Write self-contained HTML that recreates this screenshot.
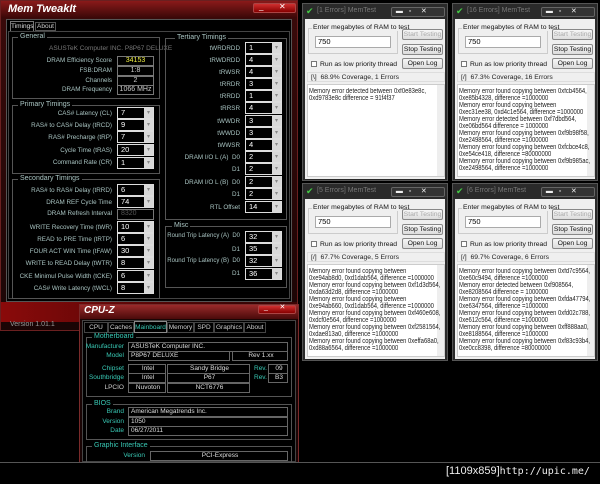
<!DOCTYPE html>
<html><head><meta charset="utf-8"><style>
*{margin:0;padding:0;box-sizing:border-box}
body{width:600px;height:484px;background:#000;position:relative;overflow:hidden;font-family:"Liberation Sans",sans-serif}
div{position:absolute}
.l{color:#a9c4c2;font-size:6.3px;text-align:right;white-space:nowrap;line-height:9px}
.c{width:37px;height:12px;border:1px solid #ddd;background:#000;color:#fff;font-size:7.5px;line-height:10px;padding-left:3px}
.c::after{content:"▾";position:absolute;right:0;top:0;width:9px;height:10px;background:#d8d8d8;color:#888;font-size:6px;text-align:center;line-height:10px}
.v{height:10px;border:1px solid #777;background:#000;color:#ccc;font-size:7px;line-height:8px;text-align:center}
.g{border:1px solid #555}
.gt{background:#000;color:#a9c4c2;font-size:7px;padding:0 2px;line-height:8px}
.mt{width:146px;height:178px;background:#2a2a2a;border:1px solid #555}
.mt .cl{left:2px;top:15px;width:140px;height:160px;background:#efefef}
.mt .tt{left:14px;top:3px;color:#777;font-size:7px}
.mt .bt{height:11px;background:linear-gradient(#f6f6f6,#ddd);border:1px solid #888;border-radius:2px;font-size:6.8px;line-height:9px;text-align:center;color:#111;white-space:nowrap}
.mt .tx{font-size:7px;line-height:7px;color:#222;white-space:nowrap;transform:scaleX(0.84);transform-origin:0 0}
.mt .ta{left:4px;top:80px;width:138px;height:93px;background:#fff;border:1px solid #ccc;overflow:hidden}
.cz{color:#38c8b4;font-size:6.5px;text-align:right;line-height:9px;white-space:nowrap}
.czv{border:1px solid #666;color:#ddd;font-size:6.5px;line-height:8px;height:10px;padding-left:2px;white-space:nowrap}
</style></head><body>

<!-- MemTweakIt -->
<div style="left:0;top:0;width:298px;height:331px;background:linear-gradient(#3a0a0a,#1a0505);border:1px solid #6a2020"></div>
<div style="left:1px;top:1px;width:296px;height:17px;background:linear-gradient(#8a1a1a,#3a0808)"></div>
<div style="left:8px;top:3px;color:#fff;font-weight:bold;font-style:italic;font-size:11px">Mem TweakIt</div>
<div style="left:253px;top:3px;width:43px;height:10px;background:linear-gradient(#d03030,#800);border:1px solid #a44;border-radius:2px"></div>
<div style="left:259px;top:2px;color:#fff;font-size:8px">_&nbsp;&nbsp;&nbsp;&nbsp;&nbsp;&nbsp;&nbsp;✕</div>
<div style="left:6px;top:19px;width:286px;height:283px;background:#000;border:1px solid #555"></div>
<div style="left:10px;top:21px;width:24px;height:10px;border:1px solid #777;border-bottom:none;background:#000;color:#ddd;font-size:6.5px;text-align:center;line-height:9px">Timings</div>
<div style="left:35px;top:22px;width:21px;height:9px;border:1px solid #555;color:#ccc;font-size:6.5px;text-align:center;line-height:8px">About</div>
<div style="left:8px;top:31px;width:282px;height:268px;border:1px solid #444"></div>
<div style="left:1px;top:302px;width:296px;height:20px;background:linear-gradient(90deg,#8a0a0a,#3a0505 80%)"></div>
<div style="left:10px;top:321px;color:#999;font-size:7px">Version 1.01.1</div>

<!-- General -->
<div class="g" style="left:12px;top:37px;width:148px;height:62px"></div>
<div class="gt" style="left:18px;top:33px">General</div>
<div style="left:49px;top:45px;color:#777;font-size:6.5px">ASUSTeK Computer INC. P8P67 DELUXE</div>
<div class="l" style="left:0;width:112px;top:56px">DRAM Efficiency Score</div><div class="v" style="left:117px;top:56px;width:37px;color:#ee4">34153</div>
<div class="l" style="left:0;width:112px;top:66px">FSB:DRAM</div><div class="v" style="left:117px;top:66px;width:37px">1:8</div>
<div class="l" style="left:0;width:112px;top:76px">Channels</div><div class="v" style="left:117px;top:76px;width:37px">2</div>
<div class="l" style="left:0;width:112px;top:85px">DRAM Frequency</div><div class="v" style="left:117px;top:85px;width:37px">1066 MHz</div>

<!-- Primary -->
<div class="g" style="left:12px;top:105px;width:148px;height:69px"></div>
<div class="gt" style="left:18px;top:101px">Primary Timings</div>
<div class="l" style="left:0;width:112px;top:109px">CAS# Latency (CL)</div><div class="c" style="left:117px;top:107px">7</div>
<div class="l" style="left:0;width:112px;top:121px">RAS# to CAS# Delay (tRCD)</div><div class="c" style="left:117px;top:119px">9</div>
<div class="l" style="left:0;width:112px;top:133px">RAS# Precharge (tRP)</div><div class="c" style="left:117px;top:131px">7</div>
<div class="l" style="left:0;width:112px;top:146px">Cycle Time (tRAS)</div><div class="c" style="left:117px;top:144px">20</div>
<div class="l" style="left:0;width:112px;top:158px">Command Rate (CR)</div><div class="c" style="left:117px;top:157px">1</div>

<!-- Secondary -->
<div class="g" style="left:12px;top:179px;width:148px;height:120px"></div>
<div class="gt" style="left:18px;top:175px">Secondary Timings</div>
<div class="l" style="left:0;width:112px;top:186px">RAS# to RAS# Delay (tRRD)</div><div class="c" style="left:117px;top:184px">6</div>
<div class="l" style="left:0;width:112px;top:198px">DRAM REF Cycle Time</div><div class="c" style="left:117px;top:196px">74</div>
<div class="l" style="left:0;width:112px;top:209px">DRAM Refresh Interval</div><div class="v" style="left:117px;top:209px;width:37px;height:11px;text-align:left;padding-left:3px;color:#555">8320</div>
<div class="l" style="left:0;width:112px;top:223px">WRITE Recovery Time (tWR)</div><div class="c" style="left:117px;top:221px">10</div>
<div class="l" style="left:0;width:112px;top:235px">READ to PRE Time (tRTP)</div><div class="c" style="left:117px;top:233px">6</div>
<div class="l" style="left:0;width:112px;top:247px">FOUR ACT WIN Time (tFAW)</div><div class="c" style="left:117px;top:245px">30</div>
<div class="l" style="left:0;width:112px;top:259px">WRITE to READ Delay (tWTR)</div><div class="c" style="left:117px;top:257px">8</div>
<div class="l" style="left:0;width:112px;top:272px">CKE Minimul Pulse Width (tCKE)</div><div class="c" style="left:117px;top:270px">6</div>
<div class="l" style="left:0;width:112px;top:284px">CAS# Write Latency (tWCL)</div><div class="c" style="left:117px;top:282px">8</div>

<!-- Tertiary -->
<div class="g" style="left:165px;top:38px;width:122px;height:182px"></div>
<div class="gt" style="left:175px;top:34px">Tertiary Timings</div>
<div class="l" style="left:150px;width:90px;top:44px">tWRDRDD</div><div class="c" style="left:245px;top:42px">1</div>
<div class="l" style="left:150px;width:90px;top:56px">tRWDRDD</div><div class="c" style="left:245px;top:54px">4</div>
<div class="l" style="left:150px;width:90px;top:68px">tRWSR</div><div class="c" style="left:245px;top:66px">4</div>
<div class="l" style="left:150px;width:90px;top:80px">tRRDR</div><div class="c" style="left:245px;top:78px">3</div>
<div class="l" style="left:150px;width:90px;top:92px">tRRDD</div><div class="c" style="left:245px;top:90px">1</div>
<div class="l" style="left:150px;width:90px;top:104px">tRRSR</div><div class="c" style="left:245px;top:102px">4</div>
<div class="l" style="left:150px;width:90px;top:117px">tWWDR</div><div class="c" style="left:245px;top:115px">3</div>
<div class="l" style="left:150px;width:90px;top:129px">tWWDD</div><div class="c" style="left:245px;top:127px">3</div>
<div class="l" style="left:150px;width:90px;top:141px">tWWSR</div><div class="c" style="left:245px;top:139px">4</div>
<div class="l" style="left:150px;width:90px;top:153px">DRAM I/O L (A)&nbsp;&nbsp;D0</div><div class="c" style="left:245px;top:151px">2</div>
<div class="l" style="left:150px;width:90px;top:165px">D1</div><div class="c" style="left:245px;top:163px">2</div>
<div class="l" style="left:150px;width:90px;top:178px">DRAM I/O L (B)&nbsp;&nbsp;D0</div><div class="c" style="left:245px;top:176px">2</div>
<div class="l" style="left:150px;width:90px;top:190px">D1</div><div class="c" style="left:245px;top:188px">2</div>
<div class="l" style="left:150px;width:90px;top:203px">RTL Offset</div><div class="c" style="left:245px;top:201px">14</div>

<!-- Misc -->
<div class="g" style="left:165px;top:226px;width:122px;height:62px"></div>
<div class="gt" style="left:172px;top:222px">Misc</div>
<div class="l" style="left:150px;width:90px;top:232px;font-size:6px">Round Trip Latency (A)&nbsp;&nbsp;D0</div><div class="c" style="left:245px;top:231px">32</div>
<div class="l" style="left:150px;width:90px;top:245px">D1</div><div class="c" style="left:245px;top:243px">35</div>
<div class="l" style="left:150px;width:90px;top:257px;font-size:6px">Round Trip Latency (B)&nbsp;&nbsp;D0</div><div class="c" style="left:245px;top:255px">32</div>
<div class="l" style="left:150px;width:90px;top:269px">D1</div><div class="c" style="left:245px;top:268px">36</div>

<!-- CPU-Z -->
<div style="left:79px;top:304px;width:220px;height:160px;background:#1a0505;border:1px solid #7a2a2a"></div>
<div style="left:80px;top:305px;width:218px;height:14px;background:linear-gradient(#9a2a2a,#4a0a0a)"></div>
<div style="left:84px;top:305px;color:#fff;font-weight:bold;font-style:italic;font-size:10px">CPU-Z</div>
<div style="left:258px;top:305px;width:38px;height:9px;background:linear-gradient(#d03030,#800);border:1px solid #a44;border-radius:2px"></div>
<div style="left:264px;top:303px;color:#fff;font-size:7px">_&nbsp;&nbsp;&nbsp;&nbsp;&nbsp;&nbsp;✕</div>
<div style="left:82px;top:320px;width:214px;height:142px;background:#000;border:1px solid #444"></div>
<div style="left:84px;top:322px;width:24px;height:11px;border:1px solid #444;color:#ccc;font-size:6.5px;text-align:center;line-height:10px">CPU</div>
<div style="left:108px;top:322px;width:26px;height:11px;border:1px solid #444;color:#ccc;font-size:6.5px;text-align:center;line-height:10px">Caches</div>
<div style="left:134px;top:321px;width:33px;height:12px;border:1px solid #888;color:#38c8b4;font-size:6.5px;text-align:center;line-height:11px">Mainboard</div>
<div style="left:167px;top:322px;width:27px;height:11px;border:1px solid #444;color:#ccc;font-size:6.5px;text-align:center;line-height:10px">Memory</div>
<div style="left:194px;top:322px;width:20px;height:11px;border:1px solid #444;color:#ccc;font-size:6.5px;text-align:center;line-height:10px">SPD</div>
<div style="left:214px;top:322px;width:30px;height:11px;border:1px solid #444;color:#ccc;font-size:6.5px;text-align:center;line-height:10px">Graphics</div>
<div style="left:244px;top:322px;width:22px;height:11px;border:1px solid #444;color:#ccc;font-size:6.5px;text-align:center;line-height:10px">About</div>
<div class="g" style="left:86px;top:337px;width:206px;height:60px"></div>
<div class="gt" style="left:92px;top:333px;color:#38c8b4">Motherboard</div>
<div class="cz" style="left:60px;width:64px;top:342px">Manufacturer</div><div class="czv" style="left:128px;top:342px;width:160px">ASUSTeK Computer INC.</div>
<div class="cz" style="left:60px;width:64px;top:351px">Model</div><div class="czv" style="left:128px;top:351px;width:102px">P8P67 DELUXE</div><div class="czv" style="left:232px;top:351px;width:56px;text-align:center">Rev 1.xx</div>
<div class="cz" style="left:60px;width:64px;top:364px">Chipset</div><div class="czv" style="left:128px;top:364px;width:38px;text-align:center">Intel</div><div class="czv" style="left:167px;top:364px;width:83px;text-align:center">Sandy Bridge</div><div class="cz" style="left:254px;top:364px">Rev.</div><div class="czv" style="left:268px;top:364px;width:20px;text-align:center">09</div>
<div class="cz" style="left:60px;width:64px;top:373px">Southbridge</div><div class="czv" style="left:128px;top:373px;width:38px;text-align:center">Intel</div><div class="czv" style="left:167px;top:373px;width:83px;text-align:center">P67</div><div class="cz" style="left:254px;top:373px">Rev.</div><div class="czv" style="left:268px;top:373px;width:20px;text-align:center">B3</div>
<div class="cz" style="left:60px;width:64px;top:383px;color:#ccc">LPCIO</div><div class="czv" style="left:128px;top:383px;width:38px;text-align:center">Nuvoton</div><div class="czv" style="left:167px;top:383px;width:83px;text-align:center">NCT6776</div>
<div class="g" style="left:86px;top:404px;width:206px;height:36px"></div>
<div class="gt" style="left:92px;top:400px;color:#38c8b4">BIOS</div>
<div class="cz" style="left:60px;width:64px;top:407px">Brand</div><div class="czv" style="left:128px;top:407px;width:160px">American Megatrends Inc.</div>
<div class="cz" style="left:60px;width:64px;top:417px">Version</div><div class="czv" style="left:128px;top:417px;width:160px">1050</div>
<div class="cz" style="left:60px;width:64px;top:426px">Date</div><div class="czv" style="left:128px;top:426px;width:160px">06/27/2011</div>
<div class="g" style="left:86px;top:446px;width:206px;height:20px"></div>
<div class="gt" style="left:92px;top:442px;color:#38c8b4">Graphic Interface</div>
<div class="cz" style="left:100px;width:45px;top:451px">Version</div><div class="czv" style="left:150px;top:451px;width:138px;text-align:center">PCI-Express</div>

<div style="left:0;top:462px;width:600px;height:22px;background:#000;border-top:1px solid #555"></div>
<div style="left:446px;top:465px;color:#eee;font-size:11px;font-family:'Liberation Sans',sans-serif">[1109x859]<span style="font-family:'DejaVu Sans Mono',monospace;font-size:10px">http://upic.me/</span></div>

<!-- MemTest windows -->
<div style="left:300px;top:0;width:300px;height:365px;background:#000"></div>

<div class="mt" style="left:302px;top:3px">
<div style="left:3px;top:2px;color:#4c4;font-size:9px">✔</div><div class="tt">[1 Errors] MemTest</div>
<div style="left:88px;top:3px;width:54px;height:10px;background:#333;border:1px solid #666;border-radius:2px;color:#eee;font-size:7px;line-height:8px">&nbsp;&nbsp;▬&nbsp;&nbsp;&nbsp;▫&nbsp;&nbsp;&nbsp;&nbsp;&nbsp;✕</div>
<div class="cl"></div>
<div style="left:5px;top:24px;width:90px;height:26px;border:1px solid #ccc"></div>
<div style="left:9px;top:20px;background:#efefef;font-size:6.8px;color:#111;padding:0 1px">Enter megabytes of RAM to test</div>
<div style="left:12px;top:32px;width:76px;height:12px;background:#fff;border:1px solid #aaa;font-size:7.5px;padding-left:2px;line-height:10px">750</div>
<div class="bt" style="left:99px;top:25px;width:41px;color:#aaa">Start Testing</div>
<div class="bt" style="left:99px;top:40px;width:41px">Stop Testing</div>
<div class="bt" style="left:99px;top:54px;width:41px">Open Log</div>
<div style="left:8px;top:57px;width:6px;height:6px;border:1px solid #777;background:#fff"></div>
<div style="left:17px;top:57px;font-size:6.8px;color:#111">Run as low priority thread</div>
<div style="left:4px;top:68px;width:138px;height:10px;border:1px solid #ddd;font-size:6.8px;color:#222;padding-left:3px;line-height:9px">[\]&nbsp;&nbsp;68.9% Coverage, 1 Errors</div>
<div class="ta"><div style="right:0;top:0;width:7px;height:91px;background:#eee"></div>
<div class="tx" style="left:1px;top:3px">Memory error detected between 0xf0e83e8c,<br>0xd9783e8c difference = 91f4f37</div></div>
</div>

<div class="mt" style="left:452px;top:3px">
<div style="left:3px;top:2px;color:#4c4;font-size:9px">✔</div><div class="tt">[16 Errors] MemTest</div>
<div style="left:88px;top:3px;width:54px;height:10px;background:#333;border:1px solid #666;border-radius:2px;color:#eee;font-size:7px;line-height:8px">&nbsp;&nbsp;▬&nbsp;&nbsp;&nbsp;▫&nbsp;&nbsp;&nbsp;&nbsp;&nbsp;✕</div>
<div class="cl"></div>
<div style="left:5px;top:24px;width:90px;height:26px;border:1px solid #ccc"></div>
<div style="left:9px;top:20px;background:#efefef;font-size:6.8px;color:#111;padding:0 1px">Enter megabytes of RAM to test</div>
<div style="left:12px;top:32px;width:76px;height:12px;background:#fff;border:1px solid #aaa;font-size:7.5px;padding-left:2px;line-height:10px">750</div>
<div class="bt" style="left:99px;top:25px;width:41px;color:#aaa">Start Testing</div>
<div class="bt" style="left:99px;top:40px;width:41px">Stop Testing</div>
<div class="bt" style="left:99px;top:54px;width:41px">Open Log</div>
<div style="left:8px;top:57px;width:6px;height:6px;border:1px solid #777;background:#fff"></div>
<div style="left:17px;top:57px;font-size:6.8px;color:#111">Run as low priority thread</div>
<div style="left:4px;top:68px;width:138px;height:10px;border:1px solid #ddd;font-size:6.8px;color:#222;padding-left:3px;line-height:9px">[/]&nbsp;&nbsp;67.3% Coverage, 16 Errors</div>
<div class="ta"><div style="right:0;top:0;width:7px;height:91px;background:#eee"></div>
<div class="tx" style="left:1px;top:3px">Memory error found copying between 0xfcb4564,<br>0xe85b4328, difference =1000000<br>Memory error found copying between<br>0xec31ee38, 0xd4c1e564, difference =1000000<br>Memory error detected between 0xf7dbd564,<br>0xe06bd564 difference = 1000000<br>Memory error found copying between 0xf9b98f58,<br>0xe2498564, difference =1000000<br>Memory error found copying between 0xfcbce4c8,<br>0xe54ce418, difference =80000000<br>Memory error found copying between 0xf9b985ac,<br>0xe2498564, difference =1000000</div></div>
</div>

<div class="mt" style="left:302px;top:183px">
<div style="left:3px;top:2px;color:#4c4;font-size:9px">✔</div><div class="tt">[5 Errors] MemTest</div>
<div style="left:88px;top:3px;width:54px;height:10px;background:#333;border:1px solid #666;border-radius:2px;color:#eee;font-size:7px;line-height:8px">&nbsp;&nbsp;▬&nbsp;&nbsp;&nbsp;▫&nbsp;&nbsp;&nbsp;&nbsp;&nbsp;✕</div>
<div class="cl"></div>
<div style="left:5px;top:24px;width:90px;height:26px;border:1px solid #ccc"></div>
<div style="left:9px;top:20px;background:#efefef;font-size:6.8px;color:#111;padding:0 1px">Enter megabytes of RAM to test</div>
<div style="left:12px;top:32px;width:76px;height:12px;background:#fff;border:1px solid #aaa;font-size:7.5px;padding-left:2px;line-height:10px">750</div>
<div class="bt" style="left:99px;top:25px;width:41px;color:#aaa">Start Testing</div>
<div class="bt" style="left:99px;top:40px;width:41px">Stop Testing</div>
<div class="bt" style="left:99px;top:54px;width:41px">Open Log</div>
<div style="left:8px;top:57px;width:6px;height:6px;border:1px solid #777;background:#fff"></div>
<div style="left:17px;top:57px;font-size:6.8px;color:#111">Run as low priority thread</div>
<div style="left:4px;top:68px;width:138px;height:10px;border:1px solid #ddd;font-size:6.8px;color:#222;padding-left:3px;line-height:9px">[/]&nbsp;&nbsp;67.7% Coverage, 5 Errors</div>
<div class="ta"><div style="right:0;top:0;width:7px;height:91px;background:#eee"></div>
<div class="tx" style="left:1px;top:3px">Memory error found copying between<br>0xe94ab8d0, 0xd1dab564, difference =1000000<br>Memory error found copying between 0xf1d3d564,<br>0xda63d2d8, difference =1000000<br>Memory error found copying between<br>0xe94ab660, 0xd1dab564, difference =1000000<br>Memory error found copying between 0xf460e608,<br>0xdcf0e564, difference =1000000<br>Memory error found copying between 0xf2581564,<br>0xdae813a0, difference =1000000<br>Memory error found copying between 0xeffa68a0,<br>0xd88a6564, difference =1000000</div></div>
</div>

<div class="mt" style="left:452px;top:183px">
<div style="left:3px;top:2px;color:#4c4;font-size:9px">✔</div><div class="tt">[6 Errors] MemTest</div>
<div style="left:88px;top:3px;width:54px;height:10px;background:#333;border:1px solid #666;border-radius:2px;color:#eee;font-size:7px;line-height:8px">&nbsp;&nbsp;▬&nbsp;&nbsp;&nbsp;▫&nbsp;&nbsp;&nbsp;&nbsp;&nbsp;✕</div>
<div class="cl"></div>
<div style="left:5px;top:24px;width:90px;height:26px;border:1px solid #ccc"></div>
<div style="left:9px;top:20px;background:#efefef;font-size:6.8px;color:#111;padding:0 1px">Enter megabytes of RAM to test</div>
<div style="left:12px;top:32px;width:76px;height:12px;background:#fff;border:1px solid #aaa;font-size:7.5px;padding-left:2px;line-height:10px">750</div>
<div class="bt" style="left:99px;top:25px;width:41px;color:#aaa">Start Testing</div>
<div class="bt" style="left:99px;top:40px;width:41px">Stop Testing</div>
<div class="bt" style="left:99px;top:54px;width:41px">Open Log</div>
<div style="left:8px;top:57px;width:6px;height:6px;border:1px solid #777;background:#fff"></div>
<div style="left:17px;top:57px;font-size:6.8px;color:#111">Run as low priority thread</div>
<div style="left:4px;top:68px;width:138px;height:10px;border:1px solid #ddd;font-size:6.8px;color:#222;padding-left:3px;line-height:9px">[/]&nbsp;&nbsp;69.7% Coverage, 6 Errors</div>
<div class="ta"><div style="right:0;top:0;width:7px;height:91px;background:#eee"></div>
<div class="tx" style="left:1px;top:3px">Memory error found copying between 0xfd7c9564,<br>0xe60c9494, difference =1000000<br>Memory error detected between 0xf908564,<br>0xe8208564 difference = 1000000<br>Memory error found copying between 0xfda47794,<br>0xe6347564, difference =1000000<br>Memory error found copying between 0xfd02c788,<br>0xe612c564, difference =1000000<br>Memory error found copying between 0xff888aa0,<br>0xe8188564, difference =1000000<br>Memory error found copying between 0xf83c93b4,<br>0xe0cc8398, difference =80000000</div></div>
</div>

</body></html>
